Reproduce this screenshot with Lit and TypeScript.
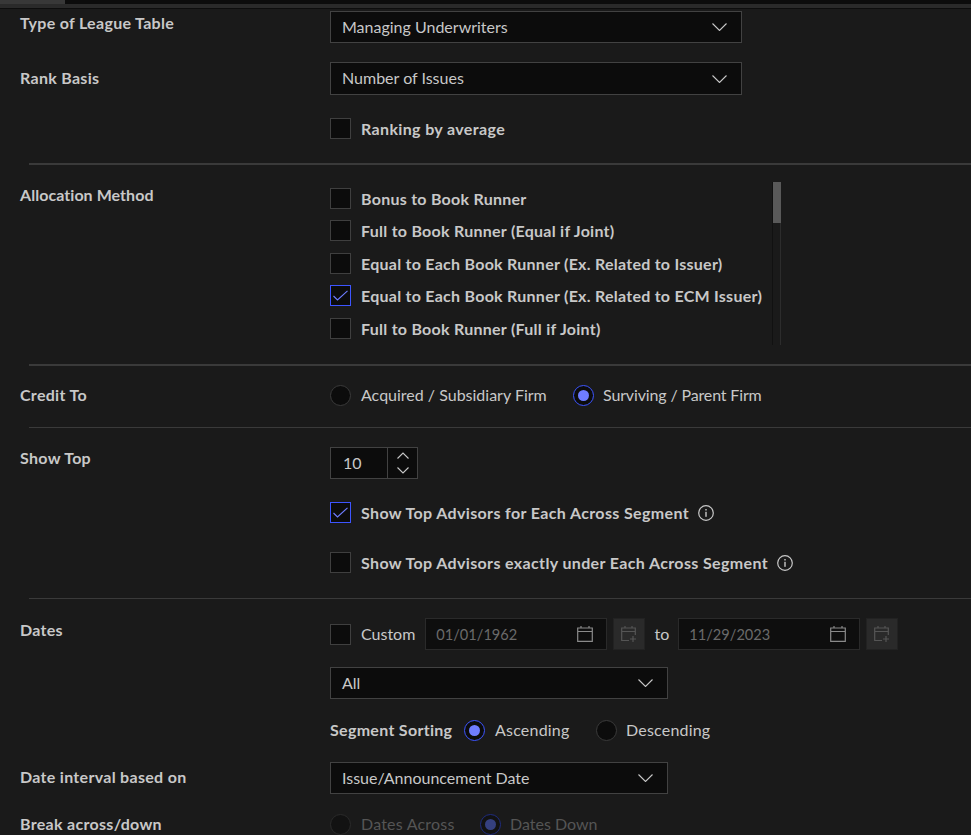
import { LitElement, html, css } from "lit";
import { customElement } from "lit/decorators.js";

const chev = html`<svg class="chev" width="15" height="8" viewBox="0 0 15 8"><path d="M.5 .5 L7.5 7.500 L14.500 .5" fill="none" stroke="#c8c8c8" stroke-width="1.1"/></svg>`;
const check = html`<svg width="15" height="11" viewBox="0 0 15 11"><path d="M.5 6 L4.5 10 L14.500 .8" fill="none" stroke="#6f7dff" stroke-width="1.1"/></svg>`;
const info = html`<svg class="info" width="16" height="16" viewBox="0 0 16 16"><circle cx="8" cy="8" r="7.3" fill="none" stroke="#c8c8c8" stroke-width="1.2"/><rect x="7.3" y="6.800" width="1.4" height="5" fill="#c8c8c8"/><rect x="7.3" y="4" width="1.4" height="1.5" fill="#c8c8c8"/></svg>`;
const cal = html`<svg width="16" height="16" viewBox="0 0 16 16"><path d="M.7 2h14.600v13.300H.7z M.7 5.500h14.600 M4 0v2 M12 0v2" fill="none" stroke="#8a8a8a" stroke-width="1.2"/></svg>`;
const calPlus = html`<svg width="16" height="16" viewBox="0 0 16 16"><path d="M8 14.500H.7V2h13.600v7 M.7 5.500h13.600 M4 0v2 M11 0v2 M12 10v6 M9 13h6" fill="none" stroke="#555" stroke-width="1.2"/></svg>`;

@customElement("app-root")
export class AppRoot extends LitElement {
  static styles = css`
    :host { display: block; width: 971px; height: 835px; overflow: hidden; background: #1a1a1a; color: #c8c8c8;
      font-family: "Lato", "Open Sans", "Liberation Sans", sans-serif; font-size: 16px; }
    .top { box-sizing: border-box; height: 9px; background: #2a2a2a; border-bottom: 1px solid #0d0d0d; }
    .strip { display: flex; height: 4px; }
    .tab { width: 65px; background: #383838; }
    .rest { flex: 1; background: #0c0c0c; }
    .row { display: grid; grid-template-columns: 330px 1fr; }
    .lab { padding-left: 20px; font-weight: 700; line-height: 20px; letter-spacing: .3px; white-space: nowrap; }
    .lab.tight { letter-spacing: .05px; }
    .p0 { padding-top: 0; } .p1 { padding-top: 1px; } .p2 { padding-top: 2px; } .p3 { padding-top: 3px; } .p5 { padding-top: 5px; } .p6 { padding-top: 6px; }
    .col { display: flex; flex-direction: column; align-items: flex-start; }
    .m2 { margin-top: 2px; } .m17 { margin-top: 17px; } .m19 { margin-top: 19px; } .m20 { margin-top: 20px; }
    .m21 { margin-top: 21px; } .m23 { margin-top: 23px; } .m24 { margin-top: 24px; } .m25 { margin-top: 25px; } .m29 { margin-top: 29px; }
    .hr { margin-left: 29px; height: 2px; background: #3a3a3a; }
    .hr.thin { height: 1px; }
    .sel { box-sizing: border-box; height: 32px; display: flex; align-items: center; justify-content: space-between;
      padding: 0 14px 2px 11px; background: #0c0c0c; border: 1px solid #424242; }
    .sel.tall { height: 33px; }
    .chev { margin-top: 2px; }
    .w412 { width: 412px; } .w338 { width: 338px; }
    .cb { box-sizing: border-box; width: 21px; height: 21px; flex: none; background: #0c0c0c; border: 1px solid #3f3f3f;
      display: flex; align-items: center; justify-content: center; }
    .cb.on { border-color: #3d55ff; }
    .opt { display: flex; align-items: center; gap: 10px; font-weight: 700; height: 21px; white-space: nowrap; letter-spacing: .26px; }
    .opt.spread { letter-spacing: .36px; }
    .radio { box-sizing: border-box; width: 21px; height: 21px; flex: none; border-radius: 50%; background: #0c0c0c; border: 1px solid #3a3a3a;
      display: flex; align-items: center; justify-content: center; }
    .radio.on { border-color: #3d55ff; }
    .radio.on::after { content: ""; width: 11px; height: 11px; border-radius: 50%; background: #6f7dff; }
    .ropt { display: flex; align-items: center; gap: 10px; height: 21px; white-space: nowrap; }
    .ropt.near { gap: 9px; }
    .t { margin-bottom: 2px; }
    .narrow { letter-spacing: -.14px; }
    .wide { letter-spacing: .2px; }
    .g243 { width: 243px; } .g132 { width: 132px; } .g150 { width: 150px; }
    .list { position: relative; box-sizing: border-box; width: 451px; height: 163px; padding-top: 5.900px; display: flex; flex-direction: column; gap: 11.500px; }
    .scroll { position: absolute; left: 442px; top: 0; bottom: 0; width: 9px; box-sizing: border-box; border-left: 1px solid #111; border-right: 1px solid #2c2c2c; }
    .thumb { width: 8px; height: 41px; background: #595959; }
    .num { display: flex; box-sizing: border-box; width: 88px; height: 32px; background: #0c0c0c; border: 1px solid #424242; }
    .num .v { box-sizing: border-box; width: 57px; padding-left: 12px; line-height: 30px; border-right: 1px solid #424242; }
    .num .st { flex: 1; display: flex; flex-direction: column; align-items: center; justify-content: center; gap: 8px; }
    .info { margin-left: -1px; }
    .date { box-sizing: border-box; width: 182px; height: 32px; display: flex; align-items: center; justify-content: space-between;
      padding: 0 13px 0 10px; background: #0e0e0e; border: 1px solid #2a2a2a; color: #6a6a6a; font-size: 14.600px; }
    .btn { box-sizing: border-box; width: 32px; height: 32px; margin-left: 6px; display: flex; align-items: center; justify-content: center; background: #2a2a2a; border: 1px solid #222; }
    .dates { display: flex; align-items: center; }
    .ctext { margin: 0 10px 2px; }
    .to { width: 33px; text-align: center; margin-bottom: 2px; }
    .sortlab { width: 134px; font-weight: 700; letter-spacing: .3px; white-space: nowrap; margin-bottom: 2px; }
    .disabled { color: #555; }
    .radio.dis { background: #121212; border-color: #2a2a2a; }
    .radio.dison { background: #121212; border-color: #1f2c80; }
    .radio.dison::after { content: ""; width: 11px; height: 11px; border-radius: 50%; background: #35407f; }
  `;

  private opt(label: string, on = false) {
    return html`<div class="opt"><span class="cb ${on ? "on" : ""}">${on ? check : ""}</span>${label}</div>`;
  }

  render() {
    const items: [string, boolean][] = [
      ["Bonus to Book Runner", false],
      ["Full to Book Runner (Equal if Joint)", false],
      ["Equal to Each Book Runner (Ex. Related to Issuer)", false],
      ["Equal to Each Book Runner (Ex. Related to ECM Issuer)", true],
      ["Full to Book Runner (Full if Joint)", false],
    ];
    return html`
      <div class="top"><div class="strip"><div class="tab"></div><div class="rest"></div></div></div>
      <div class="row m2">
        <div class="lab p2">Type of League Table</div>
        <div class="sel w412">Managing Underwriters ${chev}</div>
      </div>
      <div class="row m19">
        <div class="lab p6">Rank Basis</div>
        <div class="sel tall w412">Number of Issues ${chev}</div>
      </div>
      <div class="row m23"><div></div><div class="opt spread"><span class="cb"></span>Ranking by average</div></div>
      <div class="hr m24"></div>
      <div class="row m17">
        <div class="lab tight p3">Allocation Method</div>
        <div class="list">
          ${items.map(([l, on]) => this.opt(l, on))}
          <div class="scroll"><div class="thumb"></div></div>
        </div>
      </div>
      <div class="hr m19"></div>
      <div class="row m19">
        <div class="lab p0">Credit To</div>
        <div class="dates">
          <div class="ropt g243"><span class="radio"></span><span class="t">Acquired / Subsidiary Firm</span></div>
          <div class="ropt near"><span class="radio on"></span><span class="t narrow">Surviving / Parent Firm</span></div>
        </div>
      </div>
      <div class="hr thin m21"></div>
      <div class="row m19">
        <div class="lab p1">Show Top</div>
        <div class="col">
          <div class="num"><div class="v">10</div><div class="st">
            <svg width="12" height="7" viewBox="0 0 12 7"><path d="M.5 6.500 L6 1 L11.500 6.500" fill="none" stroke="#c8c8c8" stroke-width="1.1"/></svg>
            <svg width="12" height="7" viewBox="0 0 12 7"><path d="M.5 .5 L6 6 L11.500 .5" fill="none" stroke="#c8c8c8" stroke-width="1.1"/></svg>
          </div></div>
          <div class="opt spread m23"><span class="cb on">${check}</span>Show Top Advisors for Each Across Segment ${info}</div>
          <div class="opt spread m29"><span class="cb"></span>Show Top Advisors exactly under Each Across Segment ${info}</div>
        </div>
      </div>
      <div class="hr thin m25"></div>
      <div class="row m19">
        <div class="lab p2">Dates</div>
        <div class="col">
          <div class="dates">
            <span class="cb"></span><span class="ctext">Custom</span>
            <div class="date">01/01/1962 ${cal}</div>
            <div class="btn">${calPlus}</div>
            <span class="to">to</span>
            <div class="date">11/29/2023 ${cal}</div>
            <div class="btn">${calPlus}</div>
          </div>
          <div class="sel w338 m17">All ${chev}</div>
          <div class="dates m21">
            <span class="sortlab">Segment Sorting</span>
            <div class="ropt g132"><span class="radio on"></span><span class="t wide">Ascending</span></div>
            <div class="ropt near"><span class="radio"></span><span class="t wide">Descending</span></div>
          </div>
        </div>
      </div>
      <div class="row m21">
        <div class="lab p5">Date interval based on</div>
        <div class="sel w338">Issue/Announcement Date ${chev}</div>
      </div>
      <div class="row m20">
        <div class="lab p0">Break across/down</div>
        <div class="dates disabled">
          <div class="ropt g150"><span class="radio dis"></span><span class="t wide">Dates Across</span></div>
          <div class="ropt near"><span class="radio dison"></span><span class="t">Dates Down</span></div>
        </div>
      </div>
    `;
  }
}
